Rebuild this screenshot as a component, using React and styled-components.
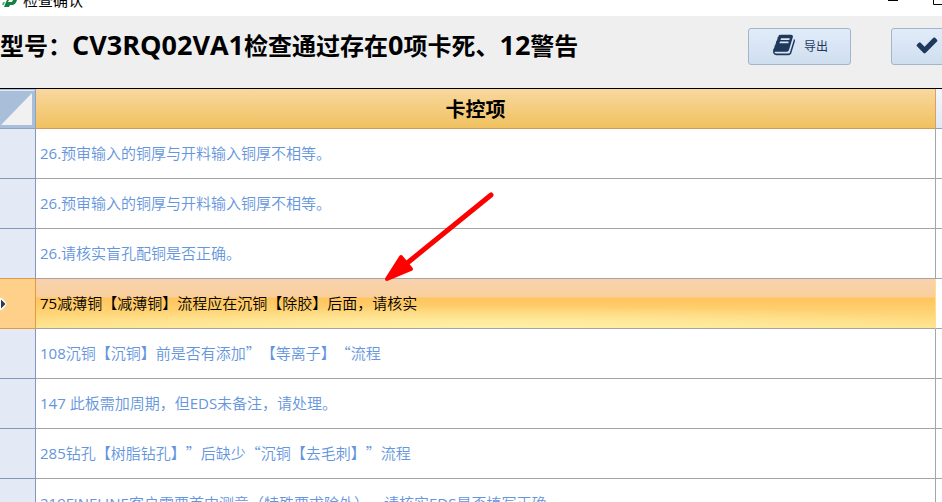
import React, { useState } from "react";
import styled, { createGlobalStyle } from "styled-components";

const GlobalStyle = createGlobalStyle`
  * {
    box-sizing: border-box;
  }
  html, body {
    margin: 0;
    background: #ffffff;
    overflow: hidden;
  }
  body {
    font-family: "Noto Sans CJK SC", sans-serif;
    font-size: 15px;
    color: #000000;
    text-spacing-trim: space-all;
  }
`;

const Window = styled.div`
  position: relative;
  height: 100vh;
  overflow: hidden;
  display: flex;
  flex-direction: column;
`;

const TitleBar = styled.header`
  flex: none;
  display: flex;
  align-items: flex-end;
  height: 16px;
  overflow: hidden;
  background: #ffffff;
`;

const TitleText = styled.span`
  flex: 1;
  padding: 0 0 6px 3px;
  font-size: 15px;
  line-height: 20px;
`;

const WindowButton = styled.button`
  display: flex;
  align-items: flex-end;
  flex: none;
  width: 45px;
  height: 24px;
  padding: 0 0 11px;
  border: none;
  background: none;
`;

const WindowButtons = styled.div`
  display: flex;
  flex: none;
  margin-right: -36px;
`;

const Toolbar = styled.section`
  flex: none;
  display: flex;
  align-items: flex-start;
  height: 73px;
  padding-top: 12px;
  background: #efefef;
  border-bottom: 1px solid #000000;
`;

const Summary = styled.h1`
  flex: 1;
  margin: 0;
  font-size: 24px;
  font-weight: 700;
  line-height: 34px;
  white-space: nowrap;
`;

const Latin = styled.span`
  font-family: "Open Sans", sans-serif;
  font-size: ${(props) => (props.$large ? "27px" : "inherit")};
  font-weight: ${(props) => (props.$large ? 700 : 400)};
  line-height: 1;
`;

const Actions = styled.div`
  display: flex;
  flex: none;
  gap: 40px;
  margin-right: -52px;
`;

const ActionButton = styled.button`
  display: flex;
  align-items: center;
  justify-content: center;
  gap: 9px;
  width: 103px;
  height: 37px;
  padding: 0 0 3px 2px;
  border: 1px solid #a5b5c9;
  border-radius: 3px;
  background: linear-gradient(#e1ecfa, #cfdeee);
  color: #1e395b;
  font-family: "Noto Sans CJK SC", sans-serif;
  font-size: 12px;
  white-space: nowrap;
  cursor: pointer;

  &:hover {
    background: linear-gradient(#edf4fd, #dbe8f6);
  }
`;

const Grid = styled.table`
  flex: none;
  width: 100%;
  table-layout: fixed;
  border-collapse: separate;
  border-spacing: 0;
`;

const Corner = styled.th`
  width: 36px;
  height: 40px;
  padding: 0;
  border-right: 1px solid #8fa3bf;
  border-bottom: 1px solid #8fa3bf;
  background: #a9bfd9;
`;

const CornerMark = styled.svg`
  display: block;
`;

const ColumnHead = styled.th`
  height: 40px;
  padding: 0 20px 0 0;
  border-right: 1px solid #d9a05f;
  border-bottom: 1px solid #cf9c5c;
  background: linear-gradient(#f9d89f, #f0c15f);
  font-size: 20px;
  font-weight: 700;
  line-height: 24px;
`;

const SpareHead = styled.th`
  width: 6px;
  padding: 0;
  border-bottom: 1px solid #8fa3bf;
  background: linear-gradient(#f3f7fd, #dfe9f6);
`;

const RowHead = styled.th`
  height: 50px;
  padding: 0;
  border-right: 1px solid ${(props) => (props.$active ? "#e39a45" : "#8398b8")};
  border-bottom: 1px solid ${(props) => (props.$active || props.$beforeActive ? "#e39a45" : "#8398b8")};
  background: ${(props) => (props.$active ? "#ffd08a" : "#e3eaf6")};
`;

const RowMark = styled.svg`
  display: block;
`;

const Cell = styled.td`
  height: 50px;
  padding: 0 0 2px 4px;
  border-right: 1px solid ${(props) => (props.$active ? "#fde08a" : "#a5a5a5")};
  border-bottom: 1px solid #a5a5a5;
  background: ${(props) =>
    props.$active
      ? "radial-gradient(ellipse 60% 22px at 50% 100%, #fff0a8, rgba(255, 240, 168, 0)), linear-gradient(#f8d2ae 0, #f9cf9c 18px, #ffc45e 19px, #fee38c 100%)"
      : "#ffffff"};
  color: ${(props) => (props.$active ? "#000000" : "#6495dd")};
  font-size: 15px;
  font-weight: 350;
  line-height: 22px;
  white-space: nowrap;
  cursor: default;
`;

const SpareCell = styled.td`
  padding: 0;
  border-bottom: 1px solid #a5a5a5;
`;

// Red pointer drawn over the rows
const Pointer = styled.svg`
  position: absolute;
  left: 380px;
  top: 188px;
  pointer-events: none;
`;

const rows = [
  "26.预审输入的铜厚与开料输入铜厚不相等。",
  "26.预审输入的铜厚与开料输入铜厚不相等。",
  "26.请核实盲孔配铜是否正确。",
  "75减薄铜【减薄铜】流程应在沉铜【除胶】后面，请核实",
  "108沉铜【沉铜】前是否有添加”【等离子】“流程",
  "147 此板需加周期，但EDS未备注，请处理。",
  "285钻孔【树脂钻孔】”后缺少“沉铜【去毛刺】”流程",
  "219FINELINE客户需要首中测意（特殊要求除外），请核实EDS是否填写正确",
];

const MixedText = ({ text, large }) =>
  text.split(/([A-Za-z0-9. ]+)/).map((part, i) =>
    i % 2 ? (
      <Latin key={i} $large={large}>
        {part}
      </Latin>
    ) : (
      part
    )
  );

const BookIcon = () => (
  <svg width="22" height="24" viewBox="0 0 1664 1792" fill="currentColor" aria-hidden="true">
    <path d="M1639 478q40 57 18 129l-275 906q-19 64-76.500 107.500t-122.500 43.500h-923q-77 0-148.500-53.500t-99.500-131.500q-24-67-2-127 0-4 3-27t4-37q1-8-3-21.500t-3-19.500q2-11 8-21t16.500-23.500 16.500-23.500q23-38 45-91.500t30-91.500q3-10 .5-30t-.5-28q3-11 17-28t17-23q21-36 42-92t25-90q1-9-2.500-32t.5-28q4-13 22-30.500t22-22.500q19-26 42.500-84.500t27.500-96.500q1-8-3-25.500t-2-26.500q2-8 9-18t18-23 17-21q8-12 16.500-30.500t15-35 16-36 19.500-32 26.500-23.500 36-11.500 47.500 5.500l-1 3q38-9 51-9h761q74 0 114 56t18 130l-274 906q-36 119-71.500 153.500t-128.500 34.500h-869q-27 0-38 15-11 16-1 43 24 70 144 70h923q29 0 56-15.500t35-41.500l300-987q7-22 5-57 38 15 59 43zm-1064 2q-4 13 2 22.500t20 9.500h608q13 0 25.500-9.500t16.500-22.500l21-64q4-13-2-22.500t-20-9.500h-608q-13 0-25.500 9.500t-16.500 22.500zm-83 256q-4 13 2 22.500t20 9.500h608q13 0 25.500-9.500t16.500-22.500l21-64q4-13-2-22.500t-20-9.500h-608q-13 0-25.500 9.500t-16.500 22.500z" />
  </svg>
);

const CheckIcon = () => (
  <svg width="24" height="24" viewBox="0 0 1792 1792" fill="currentColor" aria-hidden="true">
    <path d="M1671 566q0 40-28 68l-724 724-136 136q-28 28-68 28t-68-28l-136-136-362-362q-28-28-28-68t28-68l136-136q28-28 68-28t68 28l294 295 656-657q28-28 68-28t68 28l136 136q28 28 28 68z" />
  </svg>
);

const App = () => {
  const [active, setActive] = useState(3);

  return (
    <>
      <GlobalStyle />
      <Window>
        <TitleBar>
          <svg width="20" height="16" viewBox="0 0 20 16" aria-hidden="true">
            <path d="M7 0h10q-1 4-4 5h-3l-1 2H4l2-5z" fill="#15803f" />
            <path d="M3 2h2L4 5H2z" fill="#5fae80" />
            <path d="M9 0h4l-1 2H8z" fill="#fff" />
          </svg>
          <TitleText>检查确认</TitleText>
          <WindowButtons>
            <WindowButton aria-label="最小化">
              <svg width="10" height="10" viewBox="0 0 10 10">
                <path d="M0 5.500h10" stroke="#000" />
              </svg>
            </WindowButton>
            <WindowButton aria-label="最大化">
              <svg width="10" height="10" viewBox="0 0 10 10">
                <path d="M.5.5h9v9h-9z" fill="none" stroke="#000" />
              </svg>
            </WindowButton>
          </WindowButtons>
        </TitleBar>

        <Toolbar>
          <Summary>
            <MixedText text="型号：CV3RQ02VA1检查通过存在0项卡死、12警告" large />
          </Summary>
          <Actions>
            <ActionButton>
              <BookIcon />
              导出
            </ActionButton>
            <ActionButton>
              <CheckIcon />
              确认
            </ActionButton>
          </Actions>
        </Toolbar>

        <Grid>
          <thead>
            <tr>
              <Corner aria-label="全选">
                <CornerMark width="35" height="39" viewBox="0 0 35 39">
                  <path d="M0 1.500h34.500" stroke="#dfe8f3" />
                  <path d="M32 4v32H1z" fill="#f1f1f1" />
                </CornerMark>
              </Corner>
              <ColumnHead>卡控项</ColumnHead>
              <SpareHead />
            </tr>
          </thead>
          <tbody>
            {rows.map((text, i) => (
              <tr key={i} onClick={() => setActive(i)}>
                <RowHead $active={i === active} $beforeActive={i === active - 1}>
                  {i === active && (
                    <RowMark width="35" height="14" viewBox="0 0 35 14">
                      <path d="M0 1h2l5 6-5 6H0z" fill="#fff" />
                      <path d="M1 2.500l4.500 4.500L1 11.500z" fill="#2b3a4f" />
                    </RowMark>
                  )}
                </RowHead>
                <Cell $active={i === active}>
                  <MixedText text={text} />
                </Cell>
                <SpareCell />
              </tr>
            ))}
          </tbody>
        </Grid>

        <Pointer width="116" height="98" viewBox="0 0 116 98" aria-hidden="true">
          <path d="M111 7L26 76" stroke="#fe0000" strokeWidth="5" strokeLinecap="round" />
          <path d="M7 91L21 69 31 81z" fill="#fe0000" stroke="#fe0000" strokeWidth="4" strokeLinejoin="round" />
        </Pointer>
      </Window>
    </>
  );
};

export default App;
